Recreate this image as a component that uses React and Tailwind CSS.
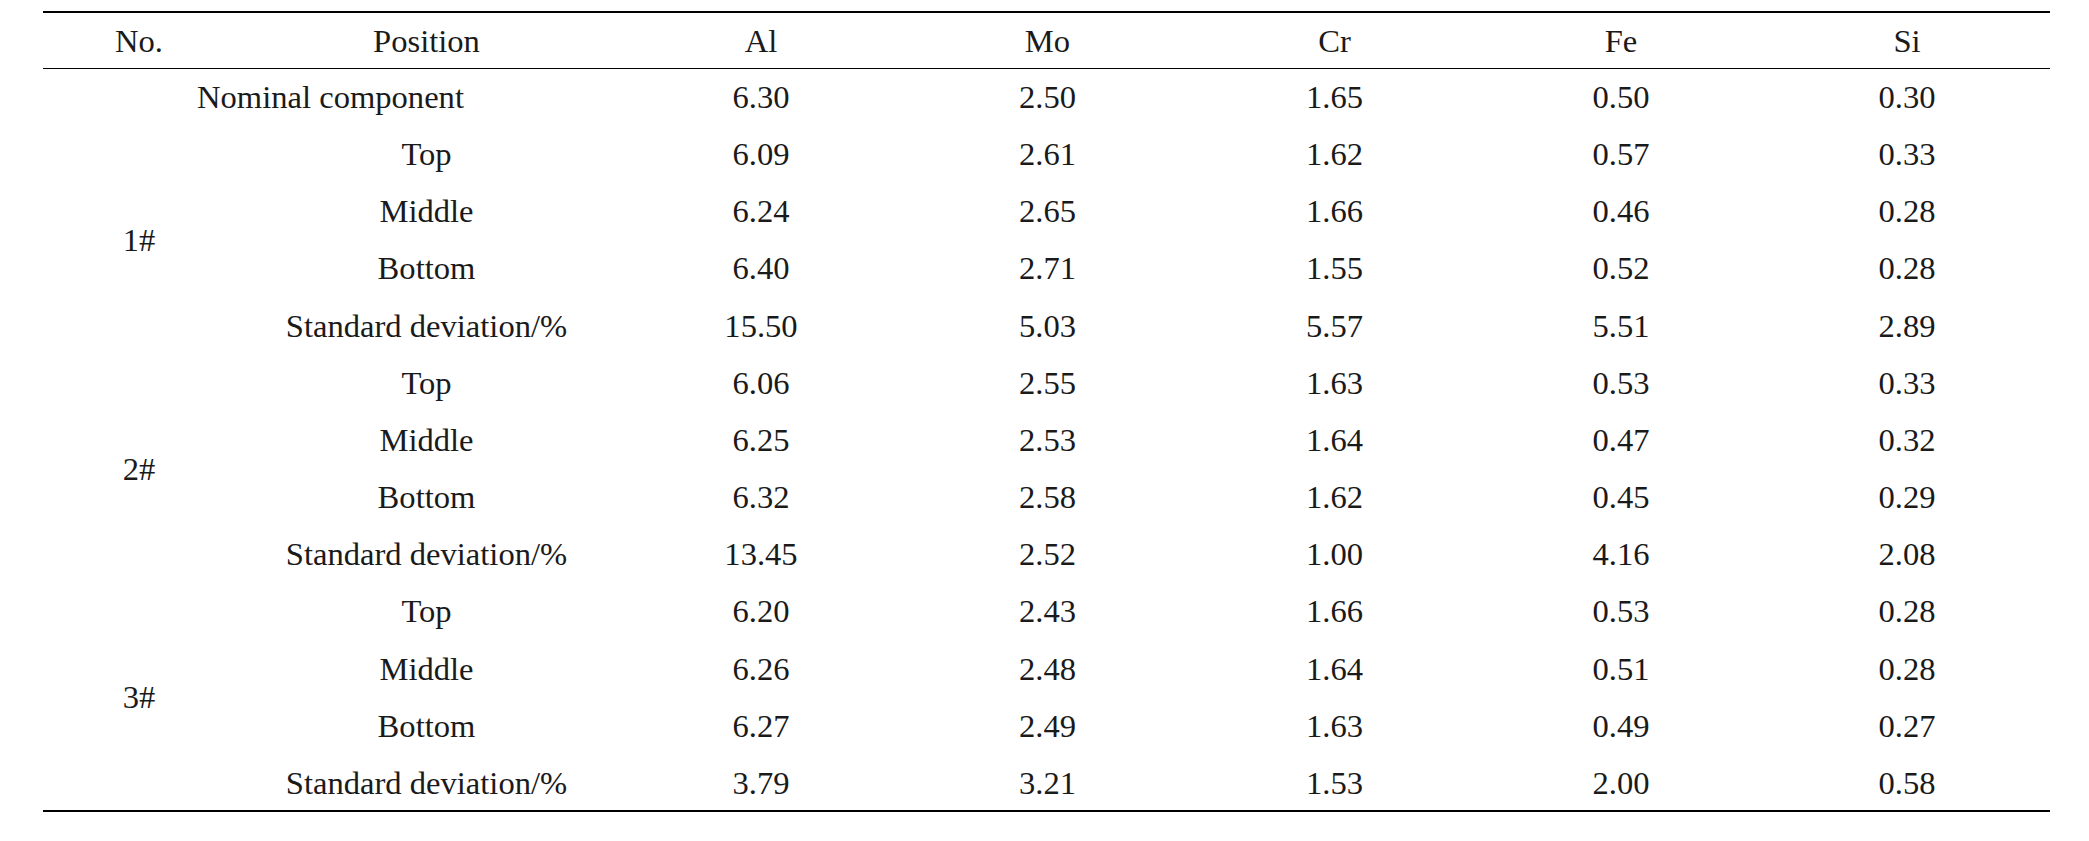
const groups = [
  {
    no: "1#",
    rows: [
      ["Top", "6.09", "2.61", "1.62", "0.57", "0.33"],
      ["Middle", "6.24", "2.65", "1.66", "0.46", "0.28"],
      ["Bottom", "6.40", "2.71", "1.55", "0.52", "0.28"],
      ["Standard deviation/%", "15.50", "5.03", "5.57", "5.51", "2.89"],
    ],
  },
  {
    no: "2#",
    rows: [
      ["Top", "6.06", "2.55", "1.63", "0.53", "0.33"],
      ["Middle", "6.25", "2.53", "1.64", "0.47", "0.32"],
      ["Bottom", "6.32", "2.58", "1.62", "0.45", "0.29"],
      ["Standard deviation/%", "13.45", "2.52", "1.00", "4.16", "2.08"],
    ],
  },
  {
    no: "3#",
    rows: [
      ["Top", "6.20", "2.43", "1.66", "0.53", "0.28"],
      ["Middle", "6.26", "2.48", "1.64", "0.51", "0.28"],
      ["Bottom", "6.27", "2.49", "1.63", "0.49", "0.27"],
      ["Standard deviation/%", "3.79", "3.21", "1.53", "2.00", "0.58"],
    ],
  },
];

const heads = ["No.", "Position", "Al", "Mo", "Cr", "Fe", "Si"];

export default function App() {
  return (
    <div className="w-[2089px] h-[841px] bg-white pt-[11px] pl-[43px] text-[#1a1a1a] font-['Liberation_Serif','Times_New_Roman',serif] text-[32.6px] leading-none">
      <table className="w-[2007px] table-fixed border-collapse border-t-2 border-b-[2.5px] border-black">
        <colgroup>
          <col className="w-[192px]" />
          <col className="w-[383px]" />
          <col className="w-[286px]" />
          <col className="w-[287px]" />
          <col className="w-[287px]" />
          <col className="w-[286px]" />
          <col className="w-[286px]" />
        </colgroup>
        <thead>
          <tr className="h-[56px] border-b-[1.5px] border-black">
            {heads.map((h) => (
              <th key={h} className="font-normal text-center align-middle p-0 pt-[3px]">
                {h}
              </th>
            ))}
          </tr>
        </thead>
        <tbody>
          <tr className="h-[57.2px]">
            <td colSpan={2} className="text-center align-middle p-0 pt-[1px]">
              Nominal component
            </td>
            {["6.30", "2.50", "1.65", "0.50", "0.30"].map((v, i) => (
              <td key={i} className="text-center align-middle p-0 pt-[1px]">
                {v}
              </td>
            ))}
          </tr>
          {groups.map((g) =>
            g.rows.map((r, ri) => (
              <tr key={g.no + ri} className="h-[57.2px]">
                {ri === 0 && (
                  <td rowSpan={4} className="text-center align-middle p-0 pt-[1px]">
                    {g.no}
                  </td>
                )}
                {r.map((v, i) => (
                  <td key={i} className="text-center align-middle p-0 pt-[1px]">
                    {v}
                  </td>
                ))}
              </tr>
            ))
          )}
        </tbody>
      </table>
    </div>
  );
}
